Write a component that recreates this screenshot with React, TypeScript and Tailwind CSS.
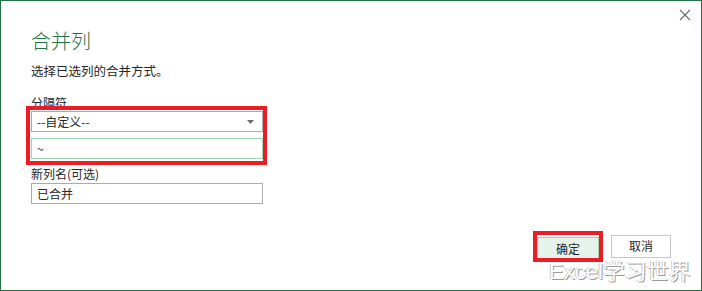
import React from "react";

const font = '"Noto Sans CJK SC", "Noto Sans", sans-serif';

export default function App() {
  return (
    <div
      className="relative flex h-[291px] w-[702px] flex-col border border-[#217346] bg-white text-[#262626]"
      style={{ fontFamily: font }}
    >
      {/* close */}
      <svg
        className="absolute right-[10px] top-[8px]"
        width="12"
        height="12"
        viewBox="0 0 12 12"
      >
        <path d="M1 1L11 11M11 1L1 11" stroke="#6b6b6b" strokeWidth="1.1" fill="none" />
      </svg>

      <div className="flex flex-col pl-[30px] pt-[28px]">
        <h1 className="text-[20px] leading-[24px] font-light text-[#217346]">合并列</h1>
        <p className="mt-[10px] text-[12.5px] leading-[16px]">选择已选列的合并方式。</p>

        <div className="relative mt-[16px] w-[232px]">
          <label className="block text-[12px] leading-[16px]">分隔符</label>
          <div className="flex h-[21px] items-center justify-between border border-[#ababab] px-[5px] text-[12px]">
            <span>--自定义--</span>
            <svg width="7" height="4" viewBox="0 0 7 4" className="mr-[3px]">
              <path d="M0 0H7L3.5 4Z" fill="#6d6d6d" />
            </svg>
          </div>
          <div className="mt-[6px] flex h-[21px] items-center border border-[#9fd5b3] px-[5px] text-[12px]">
            ~
          </div>
          {/* annotation */}
          <div className="absolute left-[-5px] top-[11px] h-[59px] w-[241px] border-[4px] border-[#ed1c24]" />

          <label className="mt-[7px] block text-[12px] leading-[16px]">新列名(可选)</label>
          <div className="mt-[1px] flex h-[21px] items-center border border-[#ababab] px-[5px] text-[12px]">
            已合并
          </div>
        </div>
      </div>

      <div className="mt-auto flex justify-end gap-[12px] pb-[30px] pr-[30px]">
        <div className="relative">
          <button className="h-[23px] w-[62px] border border-[#9fd5b3] bg-[#e6f3ea] text-[12px] text-[#262626]">
            确定
          </button>
          <div className="absolute left-[-4px] top-[-4px] h-[31px] w-[70px] border-[4px] border-[#ed1c24]" />
        </div>
        <button className="h-[23px] w-[60px] border border-[#c6c6c6] bg-white text-[12px] text-[#262626]">
          取消
        </button>
      </div>

      <div
        className="absolute left-[548px] top-[258px] text-[22px] leading-[26px] text-white [text-shadow:1px_1px_0_#9a9a9a,-1px_0_0_#c8c8c8]"
        style={{ fontFamily: '"Liberation Sans", "Noto Sans CJK SC", sans-serif' }}
      >
        Excel学习世界
      </div>
    </div>
  );
}
